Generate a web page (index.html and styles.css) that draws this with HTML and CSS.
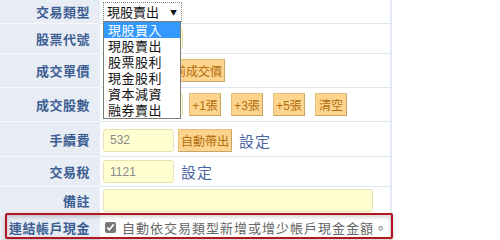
FILE: index.html
```html
<!DOCTYPE html>
<html>
    <head>
        <title>新增交易</title>
        <link rel="stylesheet" href="styles.css">
    </head>
    <body>
        <div class="trade">
            <div class="row r1">
                <div class="label">交易類型</div>
                <div class="field">
                    <div class="select">現股賣出<span class="arrow">&#9660;</span></div>
                </div>
            </div>
            <div class="row r2">
                <div class="label">股票代號</div>
                <div class="field"><input class="text wide" type="text" /></div>
            </div>
            <div class="row r3">
                <div class="label">成交單價</div>
                <div class="field">
                    <input class="text short" type="text" />
                    <button class="btn">目前成交價</button>
                </div>
            </div>
            <div class="row r4">
                <div class="label">成交股數</div>
                <div class="field">
                    <input class="text wide" type="text" />
                    <div class="btns">
                        <button class="btn">+1張</button>
                        <button class="btn">+3張</button>
                        <button class="btn">+5張</button>
                        <button class="btn">清空</button>
                    </div>
                </div>
            </div>
            <div class="row r5">
                <div class="label">手續費</div>
                <div class="field">
                    <input class="text" type="text" value="532" />
                    <button class="btn">自動帶出</button>
                    <a class="setting" href="#">設定</a>
                </div>
            </div>
            <div class="row r6">
                <div class="label">交易稅</div>
                <div class="field">
                    <input class="text" type="text" value="1121" />
                    <a class="setting" href="#">設定</a>
                </div>
            </div>
            <div class="row r7">
                <div class="label">備註</div>
                <div class="field"><input class="text note" type="text" /></div>
            </div>
            <div class="row r8">
                <div class="label">連結帳戶現金</div>
                <div class="field">
                    <label class="check"><input type="checkbox" checked /> 自動依交易類型新增或增少帳戶現金金額。</label>
                </div>
            </div>
        </div>

        <ul class="options">
            <li class="active">現股買入</li>
            <li>現股賣出</li>
            <li>股票股利</li>
            <li>現金股利</li>
            <li>資本減資</li>
            <li>融券賣出</li>
        </ul>

        <div class="highlight"></div>
    </body>
</html>
```

FILE: styles.css
```css
body {
    margin: 0;
    padding: 0;
    background: white;
    font-family: "Liberation Sans", "Noto Sans CJK TC", sans-serif;
}

.trade {
    width: 390px;
    border-right: 2px solid #e4ebf4;
}

.row {
    display: flex;
}

.label {
    width: 90px;
    padding-right: 10px;
    background: #e8edf5;
    border-bottom: 1px solid #f6f8fb;
    color: #3d5e92;
    font-family: "Noto Sans CJK TC", sans-serif;
    font-weight: 700;
    font-size: 13px;
    letter-spacing: 0.5px;
    display: flex;
    align-items: center;
    justify-content: flex-end;
}

.field {
    flex: 1;
    padding-left: 3px;
    border-bottom: 1px solid #dde6f1;
    display: flex;
    align-items: center;
}

.r1 .label, .r1 .field { height: 23px; }
.r2 .label, .r2 .field { height: 29px; }
.r3 .label, .r3 .field { height: 33px; }
.r4 .label, .r4 .field { height: 33px; }
.r5 .label, .r5 .field { height: 34px; }
.r6 .label, .r6 .field { height: 29px; }
.r7 .label, .r7 .field { height: 27px; }
.r8 .label, .r8 .field { height: 25px; border-bottom: none; }

.r1 .field { align-items: flex-start; }
.r5 .field { padding-top: 2px; height: 32px; }

.select {
    margin-top: 2px;
    width: 74px;
    height: 18px;
    border: 1px dotted #8a8a8a;
    font-family: "Noto Sans CJK TC", sans-serif;
    font-size: 13px;
    line-height: 18px;
    padding-left: 3px;
    color: #111;
    position: relative;
}

.select .arrow {
    position: absolute;
    right: 4px;
    top: 0;
    font-size: 7px;
}

input.text {
    box-sizing: border-box;
    width: 71px;
    height: 23px;
    margin: 0;
    padding: 0 6px;
    background: #ffffd2;
    border: 1px solid #e6e2b4;
    border-radius: 3px;
    font-family: "Liberation Sans", sans-serif;
    font-size: 12px;
    color: #8a8a8a;
    outline: none;
}

input.wide {
    width: 80px;
}

input.short {
    width: 52px;
}

input.note {
    width: 270px;
}

.btn {
    height: 23px;
    margin: 0 0 0 4px;
    padding: 0 2px;
    background: #fdd48e;
    border: 1px solid #e8bf78;
    border-bottom-color: #c9a465;
    border-right-color: #c9a465;
    color: #b06e0c;
    font-family: "Noto Sans CJK TC", sans-serif;
    font-size: 12px;
    cursor: pointer;
}

.btns {
    display: flex;
    gap: 10px;
    margin-left: 6px;
}

.btns .btn {
    margin: 0;
    width: 32px;
    padding: 0;
    font-family: "Liberation Sans", "Noto Sans CJK TC", sans-serif;
}

.setting {
    margin-left: 7px;
    color: #4766a0;
    font-family: "Noto Sans CJK TC", sans-serif;
    font-size: 15px;
    text-decoration: none;
    letter-spacing: 1px;
}

.check {
    display: flex;
    align-items: center;
    color: #666;
    font-family: "Noto Sans CJK TC", sans-serif;
    font-size: 13px;
    letter-spacing: 1px;
    white-space: nowrap;
}

.check input {
    width: 11px;
    height: 11px;
    margin: 0 6px 0 2px;
    accent-color: #777;
}

.options {
    position: absolute;
    left: 103px;
    top: 21px;
    width: 76px;
    margin: 0;
    padding: 0;
    list-style: none;
    background: white;
    border: 1px solid #7b7b7b;
    font-family: "Noto Sans CJK TC", sans-serif;
    font-size: 13px;
    letter-spacing: 0.5px;
    line-height: 16px;
    color: #111;
}

.options li {
    padding-left: 4px;
    height: 16px;
}

.options li.active {
    background: #3399ff;
    color: white;
}

.highlight {
    position: absolute;
    left: 5px;
    top: 213px;
    width: 384px;
    height: 22px;
    border: 2px solid #b3161e;
    border-radius: 2px;
    box-shadow: inset 0 2px 4px rgba(0, 0, 0, 0.18), 0 2px 4px rgba(0, 0, 0, 0.2);
}
```
